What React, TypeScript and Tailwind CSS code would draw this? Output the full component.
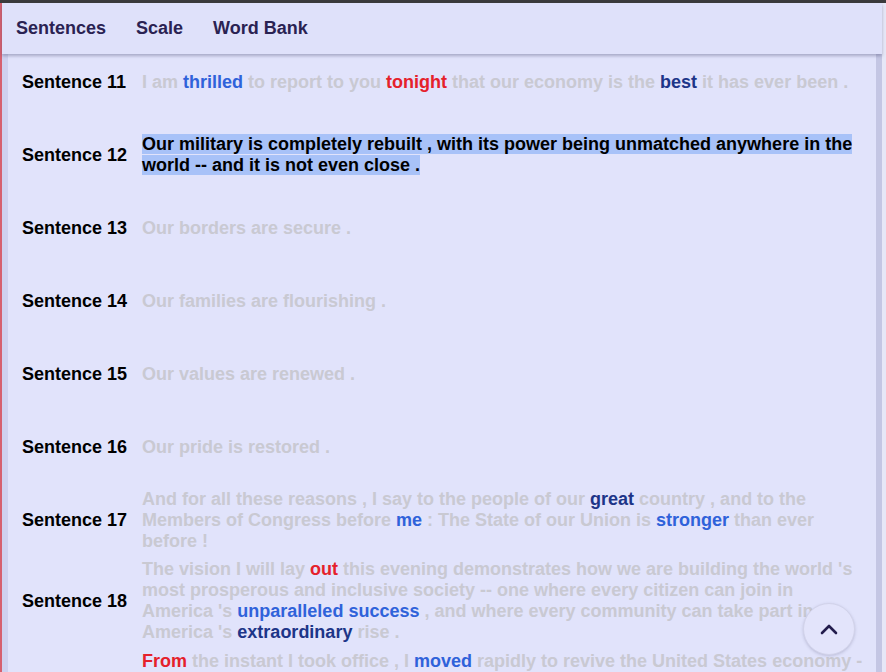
import React from "react";

type Seg = { t: string; c?: "b" | "n" | "r" };

const G = "text-[#c9c9d2]";
const colorOf = (c?: "b" | "n" | "r") =>
  c === "b" ? "text-[#2f62da]" : c === "n" ? "text-[#1d3588]" : c === "r" ? "text-[#e5212b]" : G;

const rows: { n: number; segs?: Seg[]; hl?: string }[] = [
  {
    n: 11,
    segs: [
      { t: "I am " },
      { t: "thrilled", c: "b" },
      { t: " to report to you " },
      { t: "tonight", c: "r" },
      { t: " that our economy is the " },
      { t: "best", c: "n" },
      { t: " it has ever been ." },
    ],
  },
  {
    n: 12,
    hl: "Our military is completely rebuilt , with its power being unmatched anywhere in the world -- and it is not even close .",
  },
  { n: 13, segs: [{ t: "Our borders are secure ." }] },
  { n: 14, segs: [{ t: "Our families are flourishing ." }] },
  { n: 15, segs: [{ t: "Our values are renewed ." }] },
  { n: 16, segs: [{ t: "Our pride is restored ." }] },
  {
    n: 17,
    segs: [
      { t: "And for all these reasons , I say to the people of our " },
      { t: "great", c: "n" },
      { t: " country , and to the Members of Congress before " },
      { t: "me", c: "b" },
      { t: " : The State of our Union is " },
      { t: "stronger", c: "b" },
      { t: " than ever before !" },
    ],
  },
  {
    n: 18,
    segs: [
      { t: "The vision I will lay " },
      { t: "out", c: "r" },
      {
        t: " this evening demonstrates how we are building the world 's most prosperous and inclusive society -- one where every citizen can join in America 's ",
      },
      { t: "unparalleled success", c: "b" },
      { t: " , and where every community can take part in America 's " },
      { t: "extraordinary", c: "n" },
      { t: " rise ." },
    ],
  },
  {
    n: 19,
    segs: [
      { t: "From", c: "r" },
      { t: " the instant I took office , I " },
      { t: "moved", c: "b" },
      {
        t: " rapidly to revive the United States economy -- slashing a record number of job-killing regulations , enacting historic and record-setting tax cuts , and fighting for fair and reciprocal trade deals .",
      },
    ],
  },
];

export default function App() {
  return (
    <div
      className="w-[886px] h-[672px] overflow-hidden bg-[#e1e3fb] flex flex-col"
      style={{ fontFamily: '"Liberation Sans", Arial, sans-serif' }}
    >
      <div className="h-[3px] bg-[#3a3a3c] shrink-0" />
      <div className="relative flex-1 flex min-h-0">
        <div className="w-[2px] bg-[#d6606f] shrink-0" />
        <div className="w-[6px] bg-[#cfd1ef] shrink-0" />
        <div className="flex-1 flex flex-col gap-[5px] pt-[45px] pl-[14px] min-w-0">
          {rows.map((r) => (
            <div key={r.n} className="flex items-center min-h-[68px] shrink-0">
              <div className="w-[120px] shrink-0 whitespace-nowrap text-[18px] leading-[21px] font-bold text-black">
                Sentence {r.n}
              </div>
              <div className="w-[722px] shrink-0 text-[18px] leading-[21px] font-bold">
                {r.hl ? (
                  <span className="bg-[#a8c2f8] text-black">{r.hl}</span>
                ) : (
                  r.segs!.map((s, i) => (
                    <span key={i} className={colorOf(s.c)}>
                      {s.t}
                    </span>
                  ))
                )}
              </div>
            </div>
          ))}
        </div>
        <div className="w-[6px] bg-[#c4c6e4] shrink-0" />
        <div className="w-[4px] bg-[#e6e7f7] shrink-0" />

        <div className="absolute left-[2px] right-[4px] top-0 h-[51px] bg-[#dfe1fa] shadow-[0_2px_3px_rgba(60,60,100,0.35)] flex items-center">
          <div className="flex items-center text-[18px] font-bold text-[#2a2252]">
            <span className="pl-[14px] pr-[15px]">Sentences</span>
            <span className="px-[15px]">Scale</span>
            <span className="px-[15px]">Word Bank</span>
          </div>
        </div>

        <button className="absolute left-[803px] top-[600px] w-[52px] h-[52px] rounded-full bg-[#e3e4fb] border border-[#d2d3ea] shadow-[0_1px_3px_rgba(80,80,120,0.25)] flex items-center justify-center">
          <svg width="20" height="12" viewBox="0 0 20 12">
            <path d="M3 10 L10 3 L17 10" fill="none" stroke="#231c4d" strokeWidth="2.6" strokeLinecap="round" strokeLinejoin="round" />
          </svg>
        </button>
      </div>
    </div>
  );
}
